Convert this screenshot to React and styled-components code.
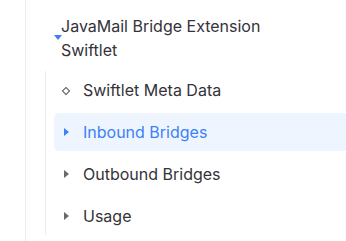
import React from 'react'
import styled, { createGlobalStyle } from 'styled-components'

const GlobalStyle = createGlobalStyle`
  body {
    margin: 0;
    background: #ffffff;
    font-family: Inter, 'Noto Sans', sans-serif;
  }
`

const items = [
  { label: 'Swiftlet Meta Data', kind: 'leaf' },
  { label: 'Inbound Bridges', kind: 'branch', active: true },
  { label: 'Outbound Bridges', kind: 'branch' },
  { label: 'Usage', kind: 'branch' },
]

function App() {
  return (
    <>
      <GlobalStyle />
      <Page>
        <Tree>
          <Title>
            <Caret />
            <TitleText>
              JavaMail Bridge Extension
              <br />
              Swiftlet
            </TitleText>
          </Title>
          <List>
            {items.map((item) => (
              <Row key={item.label} $active={item.active}>
                <IconSlot>
                  {item.kind === 'leaf' ? (
                    <Diamond />
                  ) : (
                    <Arrow $active={item.active} />
                  )}
                </IconSlot>
                {item.label}
              </Row>
            ))}
          </List>
        </Tree>
      </Page>
    </>
  )
}

export default App

const Page = styled.div`
  width: 346px;
  height: 241px;
  overflow: hidden;
  padding-left: 25px;
  box-sizing: border-box;
`
const Tree = styled.div`
  border-left: 1px solid #ececee;
  height: 241px;
  padding-top: 14px;
  box-sizing: border-box;
`
const Title = styled.div`
  position: relative;
  padding-left: 35px;
  font-size: 16px;
  line-height: 24px;
  color: #333338;
  margin-bottom: 9px;
`
const Caret = styled.span`
  position: absolute;
  left: 28px;
  top: 21px;
  width: 0;
  height: 0;
  border-left: 4px solid transparent;
  border-right: 4px solid transparent;
  border-top: 5px solid #3b82f6;
`
const TitleText = styled.div``
const List = styled.div`
  margin-left: 19px;
  border-left: 1px solid #ececee;
  display: flex;
  flex-direction: column;
  gap: 4px;
  padding-left: 8px;
`
const Row = styled.div`
  display: flex;
  align-items: center;
  height: 38px;
  border-radius: 5px 0 0 5px;
  font-size: 16px;
  color: ${(p) => (p.$active ? '#3b82f6' : '#333338')};
  background: ${(p) => (p.$active ? '#eff5fe' : 'transparent')};
`
const IconSlot = styled.span`
  width: 24px;
  margin-right: 5px;
  display: flex;
  justify-content: center;
`
const Diamond = styled.span`
  width: 4px;
  height: 4px;
  margin-top: 1px;
  border: 1.6px solid #58585c;
  transform: rotate(45deg);
`
const Arrow = styled.span`
  width: 0;
  height: 0;
  border-top: 4.5px solid transparent;
  border-bottom: 4.5px solid transparent;
  border-left: 5px solid ${(p) => (p.$active ? '#3b82f6' : '#6a6a6e')};
`
